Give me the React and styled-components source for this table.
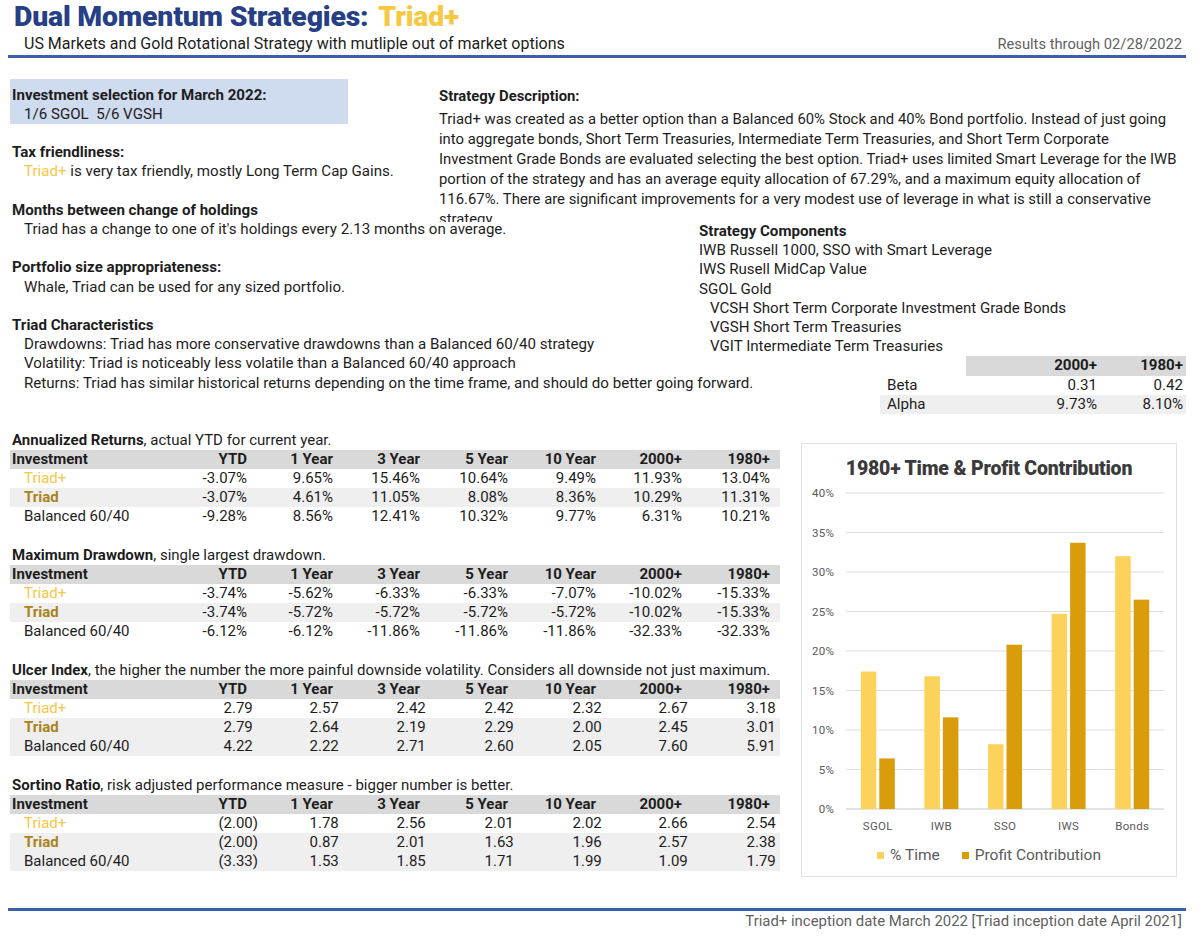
import React from 'react';
import styled, { createGlobalStyle } from 'styled-components';

const GlobalStyle = createGlobalStyle`
  body {
    margin: 0;
    background: #ffffff;
    font-family: Roboto, "Liberation Sans", Arial, sans-serif;
    color: #1d1d1d;
  }
`;

const colors = {
  navy: '#263f85',
  rule: '#3d5ea9',
  gold: '#f6c844',
  goldDark: '#a9841c',
  headBg: '#d9d9d9',
  rowBg: '#efefef',
  boxBg: '#cfdbef',
  grey: '#5f5f5f',
  barLight: '#fcd25b',
  barDark: '#d99c0b',
};

const Page = styled.div`
  width: 1178px;
  height: 938px;
  margin-left: 8px;
  display: flex;
  flex-direction: column;
`;

/* ---------- header ---------- */

const Header = styled.header`
  border-bottom: 3px solid ${colors.rule};
  padding: 0 4px 1px 6px;
`;

const Title = styled.h1`
  margin: 0;
  font-size: 28.4px;
  line-height: 34px;
  font-weight: 900;
  color: ${colors.navy};
  letter-spacing: -0.2px;

  span {
    color: ${colors.gold};
    margin-left: 10px;
  }
`;

const SubRow = styled.div`
  display: flex;
  justify-content: space-between;
  align-items: baseline;
  padding-left: 10px;
  font-size: 16px;
  line-height: 20px;
`;

const Muted = styled.span`
  font-size: 14.7px;
  color: ${colors.grey};
`;

/* ---------- top information grid ---------- */

const TopGrid = styled.section`
  display: grid;
  grid-template-columns: 429px 260px 1fr;
  grid-template-rows: 143px auto;
  margin-top: 21px;
  padding-left: 2px;
  font-size: 15.1px;
  line-height: 19.2px;
`;

const LeftColumn = styled.div`
  grid-column: 1;
  grid-row: 1 / span 2;
  white-space: nowrap;
`;

const SelectionBox = styled.div`
  width: 336px;
  height: 38px;
  background: ${colors.boxBg};
  padding: 7px 0 0 2px;
  margin-bottom: 19.2px;
`;

const Block = styled.div`
  padding-left: 2px;
  margin-bottom: ${p => (p.$last ? 0 : '19.2px')};
`;

const Heading = styled.div`
  font-weight: 700;
`;

const Line = styled.div`
  padding-left: ${p => (p.$indent ? '11px' : '12px')};
`;

const Brand = styled.span`
  color: ${p => (p.$dark ? colors.goldDark : colors.gold)};
  font-weight: ${p => (p.$dark ? 700 : 400)};
`;

const Description = styled.div`
  grid-column: 2 / span 2;
  grid-row: 1;
  padding-top: 7px;
  overflow: hidden;
  font-size: 14.85px;
  line-height: 20px;
  white-space: nowrap;

  ${Heading} {
    margin-bottom: 3px;
  }
`;

const Components = styled.div`
  grid-column: 3;
  grid-row: 2;
  white-space: nowrap;
`;

const StatsTable = styled.div`
  margin-left: 181px;
  width: 306px;
`;

const StatsRow = styled.div`
  display: grid;
  grid-template-columns: 86px 134px 86px;
  background: ${p => (p.$shade ? colors.rowBg : 'transparent')};
`;

const StatsCell = styled.div`
  text-align: ${p => (p.$label ? 'left' : 'right')};
  padding: ${p => (p.$label ? '0 0 0 7px' : '0 3px 0 0')};
  font-weight: ${p => (p.$head ? 700 : 400)};
  background: ${p => (p.$head && !p.$label ? colors.headBg : 'transparent')};
`;

/* ---------- performance tables ---------- */

const Lower = styled.section`
  display: flex;
  align-items: flex-start;
  margin-top: 17px;
  padding-left: 2px;
`;

const Tables = styled.div`
  width: 770px;
  font-size: 15px;
  line-height: 19px;
`;

const TableBlock = styled.div`
  margin-bottom: 20px;
`;

const Caption = styled.div`
  padding-left: 2px;
  white-space: nowrap;

  strong {
    font-weight: 700;
  }
`;

const Row = styled.div`
  display: grid;
  grid-template-columns: 153px 87px 86px 87px 88px 88px 86px 95px;
  background: ${p => (p.$head ? colors.headBg : p.$shade ? colors.rowBg : 'transparent')};
  font-weight: ${p => (p.$head ? 700 : 400)};
`;

const Cell = styled.div`
  text-align: right;
  padding-right: ${p => (p.$end ? '10px' : '3px')};
  white-space: nowrap;
`;

const LabelCell = styled.div`
  padding-left: ${p => (p.$head ? '2px' : '14px')};
`;

const Num = styled.span`
  display: inline-block;
  margin-right: ${p => (p.$acct ? '-11px' : 0)};
`;

const Hidden = styled.span`
  visibility: hidden;
`;

/* ---------- chart ---------- */

const ChartCard = styled.div`
  margin-left: 21px;
  margin-top: 12px;
  width: 376px;
  height: 434px;
  box-sizing: border-box;
  border: 1px solid #e2e2e2;
  display: flex;
  flex-direction: column;
`;

const ChartTitle = styled.div`
  height: 39px;
  box-sizing: border-box;
  padding-top: 14px;
  font-size: 19.5px;
  line-height: 22px;
  font-weight: 900;
  color: #3b3b3b;
  text-align: center;
  letter-spacing: -0.2px;
`;

const Legend = styled.div`
  display: flex;
  justify-content: center;
  gap: 22px;
  padding-top: 6px;
  font-size: 15.5px;
  line-height: 20px;
  color: #5a5a5a;
`;

const LegendItem = styled.span`
  display: flex;
  align-items: center;
  gap: 6px;

  &::before {
    content: '';
    width: 7px;
    height: 7px;
    background: ${p => p.$color};
  }
`;

/* ---------- footer ---------- */

const Footer = styled.footer`
  margin-top: auto;
  border-top: 3px solid ${colors.rule};
  padding: 0 4px 7px 0;
  text-align: right;
  font-size: 14.9px;
  line-height: 20px;
  color: ${colors.grey};
`;

/* ---------- data ---------- */

const columns = ['YTD', '1 Year', '3 Year', '5 Year', '10 Year', '2000+', '1980+'];

const tables = [
  {
    title: 'Annualized Returns',
    note: ', actual YTD for current year.',
    shadeBalanced: false,
    rows: [
      ['-3.07%', '9.65%', '15.46%', '10.64%', '9.49%', '11.93%', '13.04%'],
      ['-3.07%', '4.61%', '11.05%', '8.08%', '8.36%', '10.29%', '11.31%'],
      ['-9.28%', '8.56%', '12.41%', '10.32%', '9.77%', '6.31%', '10.21%'],
    ],
  },
  {
    title: 'Maximum Drawdown',
    note: ', single largest drawdown.',
    shadeBalanced: false,
    rows: [
      ['-3.74%', '-5.62%', '-6.33%', '-6.33%', '-7.07%', '-10.02%', '-15.33%'],
      ['-3.74%', '-5.72%', '-5.72%', '-5.72%', '-5.72%', '-10.02%', '-15.33%'],
      ['-6.12%', '-6.12%', '-11.86%', '-11.86%', '-11.86%', '-32.33%', '-32.33%'],
    ],
  },
  {
    title: 'Ulcer Index',
    note: ', the higher the number the more painful downside volatility. Considers all downside not just maximum.',
    shadeBalanced: true,
    acct: true,
    rows: [
      ['2.79', '2.57', '2.42', '2.42', '2.32', '2.67', '3.18'],
      ['2.79', '2.64', '2.19', '2.29', '2.00', '2.45', '3.01'],
      ['4.22', '2.22', '2.71', '2.60', '2.05', '7.60', '5.91'],
    ],
  },
  {
    title: 'Sortino Ratio',
    note: ', risk adjusted performance measure - bigger number is better.',
    shadeBalanced: true,
    acct: true,
    rows: [
      ['(2.00)', '1.78', '2.56', '2.01', '2.02', '2.66', '2.54'],
      ['(2.00)', '0.87', '2.01', '1.63', '1.96', '2.57', '2.38'],
      ['(3.33)', '1.53', '1.85', '1.71', '1.99', '1.09', '1.79'],
    ],
  },
];

const chartData = [
  { label: 'SGOL', time: 17.4, profit: 6.4 },
  { label: 'IWB', time: 16.8, profit: 11.6 },
  { label: 'SSO', time: 8.2, profit: 20.8 },
  { label: 'IWS', time: 24.7, profit: 33.7 },
  { label: 'Bonds', time: 32.0, profit: 26.5 },
];

const description = [
  'Triad+ was created as a better option than a Balanced 60% Stock and 40% Bond portfolio. Instead of just going',
  'into aggregate bonds, Short Term Treasuries, Intermediate Term Treasuries, and Short Term Corporate',
  'Investment Grade Bonds are evaluated selecting the best option. Triad+ uses limited Smart Leverage for the IWB',
  'portion of the strategy and has an average equity allocation of 67.29%, and a maximum equity allocation of',
  '116.67%. There are significant improvements for a very modest use of leverage in what is still a conservative',
  'strategy.',
];

const RowLabel = ({ index, head }) => {
  if (head) return <LabelCell $head>Investment</LabelCell>;
  if (index === 0) return <LabelCell><Brand>Triad+</Brand></LabelCell>;
  if (index === 1) return <LabelCell><Brand $dark>Triad</Brand></LabelCell>;
  return <LabelCell>Balanced 60/40</LabelCell>;
};

const PerfTable = ({ table }) => (
  <TableBlock>
    <Caption>
      <strong>{table.title}</strong>
      {table.note}
    </Caption>
    <Row $head>
      <RowLabel head />
      {columns.map((c, i) => (
        <Cell key={c} $end={i === columns.length - 1}>{c}</Cell>
      ))}
    </Row>
    {table.rows.map((values, r) => (
      <Row key={r} $shade={r === 1 || (r === 2 && table.shadeBalanced)}>
        <RowLabel index={r} />
        {values.map((v, i) => (
          <Cell key={i} $end={i === values.length - 1}>
            <Num $acct={table.acct}>
              {v}
              {table.acct && !v.endsWith(')') && <Hidden>)</Hidden>}
            </Num>
          </Cell>
        ))}
      </Row>
    ))}
  </TableBlock>
);

const ContributionChart = () => {
  const left = 44;
  const right = 362;
  const top = 10;
  const bottom = 326;
  const band = (right - left) / chartData.length;
  const y = v => top + ((40 - v) / 40) * (bottom - top);
  const ticks = [0, 5, 10, 15, 20, 25, 30, 35, 40];

  return (
    <ChartCard>
      <ChartTitle>1980+ Time &amp; Profit Contribution</ChartTitle>
      <svg width="374" height="356" viewBox="0 0 374 356">
        {ticks.map(t => (
          <g key={t}>
            <line
              x1={left}
              x2={right}
              y1={y(t)}
              y2={y(t)}
              stroke={t === 0 ? '#c8c8c8' : '#dedede'}
              strokeWidth="1"
            />
            <text
              x="32"
              y={y(t) + 4}
              textAnchor="end"
              fontSize="11.5"
              fill="#595959"
              letterSpacing="0.2"
              fontFamily="Roboto, sans-serif"
            >
              {t}%
            </text>
          </g>
        ))}
        {chartData.map((d, i) => {
          const c = left + band * (i + 0.5);
          return (
            <g key={d.label}>
              <rect x={c - 17} y={y(d.time)} width="15.5" height={bottom - y(d.time)} fill={colors.barLight} />
              <rect x={c + 1.5} y={y(d.profit)} width="15.5" height={bottom - y(d.profit)} fill={colors.barDark} />
              <text
                x={c}
                y="347"
                textAnchor="middle"
                fontSize="11.5"
                fill="#595959"
                letterSpacing="0.3"
                fontFamily="Roboto, sans-serif"
              >
                {d.label}
              </text>
            </g>
          );
        })}
      </svg>
      <Legend>
        <LegendItem $color={colors.barLight}>% Time</LegendItem>
        <LegendItem $color={colors.barDark}>Profit Contribution</LegendItem>
      </Legend>
    </ChartCard>
  );
};

const App = () => {
  return (
    <Page>
      <GlobalStyle />
      <Header>
        <Title>
          Dual Momentum Strategies:<span>Triad+</span>
        </Title>
        <SubRow>
          US Markets and Gold Rotational Strategy with mutliple out of market options
          <Muted>Results through 02/28/2022</Muted>
        </SubRow>
      </Header>

      <TopGrid>
        <LeftColumn>
          <SelectionBox>
            <Heading>Investment selection for March 2022:</Heading>
            <Line>1/6 SGOL&nbsp;&nbsp;5/6 VGSH</Line>
          </SelectionBox>

          <Block>
            <Heading>Tax friendliness:</Heading>
            <Line>
              <Brand>Triad+</Brand> is very tax friendly, mostly Long Term Cap Gains.
            </Line>
          </Block>

          <Block>
            <Heading>Months between change of holdings</Heading>
            <Line>Triad has a change to one of it's holdings every 2.13 months on average.</Line>
          </Block>

          <Block>
            <Heading>Portfolio size appropriateness:</Heading>
            <Line>Whale, Triad can be used for any sized portfolio.</Line>
          </Block>

          <Block $last>
            <Heading>Triad Characteristics</Heading>
            <Line>Drawdowns: Triad has more conservative drawdowns than a Balanced 60/40 strategy</Line>
            <Line>Volatility: Triad is noticeably less volatile than a Balanced 60/40 approach</Line>
            <Line>
              Returns: Triad has similar historical returns depending on the time frame, and should do better going forward.
            </Line>
          </Block>
        </LeftColumn>

        <Description>
          <Heading>Strategy Description:</Heading>
          {description.map(text => (
            <div key={text}>{text}</div>
          ))}
        </Description>

        <Components>
          <Heading>Strategy Components</Heading>
          <div>IWB Russell 1000, SSO with Smart Leverage</div>
          <div>IWS Rusell MidCap Value</div>
          <div>SGOL Gold</div>
          <Line $indent>VCSH Short Term Corporate Investment Grade Bonds</Line>
          <Line $indent>VGSH Short Term Treasuries</Line>
          <Line $indent>VGIT Intermediate Term Treasuries</Line>
          <StatsTable>
            <StatsRow>
              <StatsCell $head $label />
              <StatsCell $head>2000+</StatsCell>
              <StatsCell $head>1980+</StatsCell>
            </StatsRow>
            <StatsRow>
              <StatsCell $label>Beta</StatsCell>
              <StatsCell>0.31</StatsCell>
              <StatsCell>0.42</StatsCell>
            </StatsRow>
            <StatsRow $shade>
              <StatsCell $label>Alpha</StatsCell>
              <StatsCell>9.73%</StatsCell>
              <StatsCell>8.10%</StatsCell>
            </StatsRow>
          </StatsTable>
        </Components>
      </TopGrid>

      <Lower>
        <Tables>
          {tables.map(t => (
            <PerfTable key={t.title} table={t} />
          ))}
        </Tables>
        <ContributionChart />
      </Lower>

      <Footer>Triad+ inception date March 2022 [Triad inception date April 2021]</Footer>
    </Page>
  );
};

export default App;
